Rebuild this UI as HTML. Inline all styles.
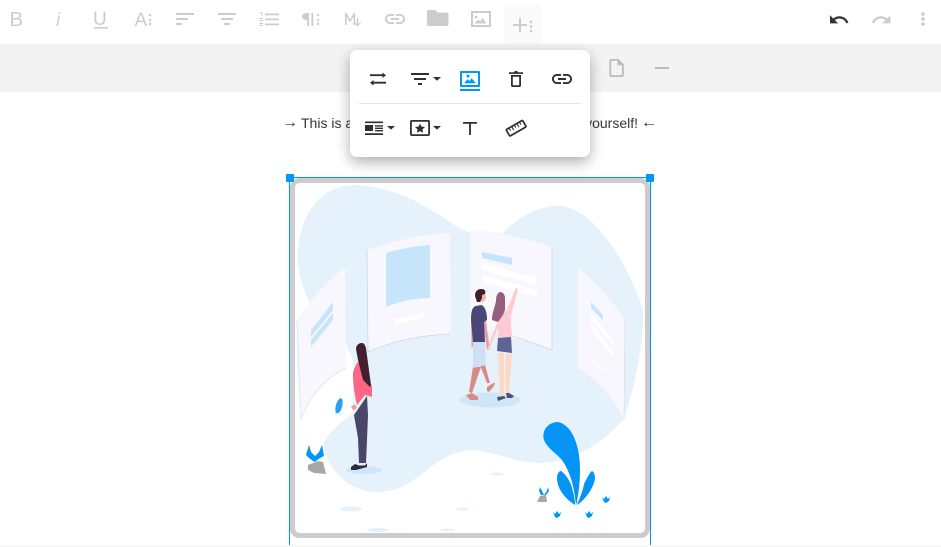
<!DOCTYPE html>
<html lang="en"><head><meta charset="utf-8"><title>Editor</title>
<style>
html,body{margin:0;padding:0;width:941px;height:547px;overflow:hidden;background:#fff;font-family:"Liberation Sans",sans-serif}
#top{position:absolute;left:0;top:44px;width:941px;height:48px;background:#f3f3f3}
.t{position:absolute;top:114px;font-size:14px;line-height:18px;color:#3a3340;white-space:nowrap}
.a{position:absolute;top:114px;font-size:16px;line-height:18px;color:#3a2b38;white-space:nowrap}
#pop{position:absolute;left:350px;top:50px;width:240px;height:107px;background:#fff;border-radius:7px;box-shadow:0 5px 14px rgba(0,0,0,.32)}
svg{position:absolute;left:0;top:0}
</style></head><body>
<div id="top"></div>
<div class="a" style="left:282px">→</div>
<div class="t" style="left:301px">This is a</div>
<div class="t" style="right:303px">yourself!</div>
<div class="a" style="left:641px">←</div>

<svg width="941" height="547" viewBox="0 0 941 547" style="font-family:'Liberation Sans',sans-serif">
<!-- toolbar -->
<rect x="504" y="5" width="38" height="39" rx="4" fill="#fafafa"/>
<g fill="#ccc">
<text x="9.500" y="26" font-size="20.500">B</text>
<text x="56" y="26" font-size="19" font-style="italic" fill="#d0d0d0">i</text>
<text x="93" y="25" font-size="19">U</text>
<rect x="94" y="27" width="14" height="1.600"/>
<text x="134.500" y="26" font-size="19">A</text>
<circle cx="150" cy="15" r="1.200"/><circle cx="150" cy="20" r="1.200"/><circle cx="150" cy="24" r="1.200"/>
<path d="M176 13h18v2h-18zM176 18h12v2h-12zM176 23h6v2h-6z"/>
<path d="M218 13h18v2h-18zM221 18h12v2h-12zM224 23h6v2h-6z"/>
<path d="M265 13.500h14v1.800h-14zM265 18.500h14v1.800h-14zM265 23.500h14v1.800h-14zM260 12h2.500v4h-1v-3h-1.500zM259.500 18h3.500v1h-3.500zM259.500 20h3.500v1h-3.500zM259.500 23h3.500v1h-3.500zM259.500 25h3.500v1h-3.500z"/>
<path d="M309 13v13h-1.800v-6c-3 0-5.200-1.500-5.200-3.500s2-3.500 5-3.500h6.200v13h-1.800V13z"/>
<circle cx="318" cy="15" r="1.200"/><circle cx="318" cy="20" r="1.200"/><circle cx="318" cy="24" r="1.200"/>
<path d="M345 25V13h1.600l3.500 6.500 3.500-6.500h1.500v12h-1.600v-8.500l-3.400 6-3.400-6v8.500z"/>
<path d="M356.800 18h1.400v6l1.900-1.800.8.8-3.400 3.200-3.400-3.200.8-.8 1.900 1.800z"/>
<path transform="translate(383,7)" d="M3.900 12c0-1.710 1.390-3.100 3.100-3.100h4V7H7c-2.760 0-5 2.240-5 5s2.240 5 5 5h4v-1.900H7c-1.710 0-3.100-1.390-3.100-3.100zM8 13h8v-2H8v2zm9-6h-4v1.900h4c1.710 0 3.100 1.390 3.100 3.100s-1.390 3.100-3.100 3.100h-4V17h4c2.760 0 5-2.240 5-5s-2.240-5-5-5z"/>
<path d="M427 11.500q0-1.500 1.500-1.500h7l2 2.500h9q2 0 2 1.500v10.500q0 1.500-1.500 1.500h-18.500q-1.500 0-1.500-1.500z"/>
<path d="M471 11h20v16h-20zM473 13v12h16V13z" fill-rule="evenodd"/>
<circle cx="476" cy="17" r="1.300"/><path d="M474.500 23.500l3.500-4 2 2 2.500-3.500 4 5.500z"/>
<path d="M513 24h14v2h-14zM519 18h2v14h-2z"/>
<circle cx="531" cy="22" r="1.300"/><circle cx="531" cy="26.500" r="1.300"/><circle cx="531" cy="31" r="1.300"/>
<path transform="translate(870.600,9) scale(.9)" d="M18.400 10.600C16.550 8.990 14.150 8 11.500 8c-4.650 0-8.580 3.030-9.960 7.220L3.900 16c1.050-3.190 4.050-5.500 7.600-5.500 1.950 0 3.730.72 5.120 1.880L13 16h9V7l-3.600 3.600z"/>
<circle cx="923" cy="14" r="1.800"/><circle cx="923" cy="19" r="1.800"/><circle cx="923" cy="24" r="1.800"/>
</g>
<path transform="translate(828.200,9) scale(.9)" fill="#333" d="M12.500 8c-2.650 0-5.050.99-6.900 2.600L2 7v9h9l-3.620-3.620c1.390-1.160 3.160-1.880 5.120-1.880 3.540 0 6.550 2.310 7.600 5.500l2.370-.78C21.080 11.030 17.150 8 12.500 8z"/>
<!-- second row -->
<path transform="translate(605.800,57.200) scale(.9)" fill="#bbb" d="M14 2H6c-1.100 0-1.990.9-1.990 2L4 20c0 1.100.89 2 1.990 2H18c1.100 0 2-.9 2-2V8l-6-6zM6 20V4h7v5h5v11H6z"/>
<rect x="655" y="67" width="14" height="2" fill="#bbb"/>

<!-- image illustration -->
<rect x="292.500" y="180.500" width="355" height="355" rx="7" fill="#fff" stroke="#ccc" stroke-width="5"/>
<path fill="#e5f2fc" d="M355 185C395 187 425 205 447 220C460 229 475 240 503 233C520 215 540 206 558 206C590 206 625 255 643 310C644 340 635 390 623 420C605 440 575 463 540 463C515 463 490 450 470 450C450 452 437 462 423 473C408 485 395 492 377 492C355 492 332 478 323 447C324 435 340 424 353 413L353 360L345 343C320 325 303 300 298 265C295 225 315 185 355 185Z"/>
<path fill="#f7f7fd" d="M297 320C312 298 330 278 345 268L346 368C325 378 308 398 301 420L297 370Z"/>
<path fill="none" stroke="#dfe3ea" stroke-width=".8" d="M346 368C325 378 308 398 301 420L297 320"/>
<path fill="#f7f7fd" d="M367 250C395 240 425 234 450 233L451 334C420 335 390 342 368 352Z"/>
<path fill="none" stroke="#cfd6e0" stroke-width=".8" d="M367 250L368 352C390 342 420 335 451 334"/>
<path fill="#c6e4fa" d="M386 253C400 249 415 246 430 245L430 298C415 298 400 301 386 307Z"/>
<path fill="#fff" d="M394 319L424 313V318L394 325Z"/>
<path fill="#f7f7fd" d="M470 230C495 231 525 238 552 247L552 350C530 342 510 338 495 332L470 330Z"/>
<path fill="none" stroke="#cfd6e0" stroke-width=".8" d="M552 247V350L510 335"/>
<path fill="#c6e4fa" d="M482 252L512 258V265L482 258Z"/>
<path fill="#fff" d="M482 263L537 278V285L482 270ZM482 275L537 290V297L482 282Z"/>
<path fill="#f7f7fd" d="M578 268C595 282 612 300 625 320L624 420C612 395 595 378 578 368Z"/>
<path fill="none" stroke="#d8dde6" stroke-width=".7" d="M625 320L624 420"/>
<path fill="#c6e4fa" d="M591 302L603 315V320L591 308Z"/>
<path fill="#fff" d="M591 313L613 340V345L591 320ZM591 322L613 352V357L591 330ZM591 356L603 369V371L590 359Z"/>
<path fill="#c6e4fa" d="M311 330L333 302V310L311 337ZM311 340L333 313V320L311 347Z"/>

<!-- left woman -->
<ellipse cx="364" cy="470" rx="18" ry="4" fill="#cfe6f9"/>
<path fill="#4a4668" d="M367 396L354 415L358 438L359 463H366L367 440L368 415Z"/>
<path fill="#2d2b3c" d="M351 467L355 464L359 465.500H365L367 463V467L356 470H351Z"/>
<path fill="#e89f9f" d="M351 406l4-1.500 2 3.500-4 2.500z"/>
<path fill="#ff6584" d="M358 362C355 366 353 371 353 375C353 385 355 396 357 405L365 395L372 397L372 386L365 372Z"/>
<path fill="#421f2c" d="M362 343C358 343 356 346 356 349L358 360L363 380L370 387L371 385L368 363L366 348C365 345 364 343 362 343Z"/>
<!-- couple -->
<ellipse cx="490" cy="400" rx="30" ry="7.500" fill="#cfe6f9"/>
<path fill="#d98a86" d="M473 367H481L472 393L469 392ZM480 365H485L490 383H487Z"/>
<path fill="#d98a86" d="M466 395L472 393L478 397V400H470ZM487 387L495 382L494 386L489 392L487 391Z"/>
<path fill="#ffd8c5" d="M498 353H504L504 397H500ZM506 354H512L510 377L509 393H506L505 377Z"/>
<path fill="#4a4f7c" d="M497 397L504 396L506 398L498 401ZM506 393L509 393L514 396L512 398H507Z"/>
<path fill="#cfdff5" d="M473 342H485L486 365L473 368Z"/>
<path fill="#e89f9f" d="M471 320L474 320L473 347H471.500ZM483 322L486 321L489 343L490 349L487 350L486 343Z"/>
<path fill="#4a4679" d="M471 320C471 312 472 307 476 306L481 305C485 306 487 312 487 320L484 322L485 342H473Z"/>
<circle cx="481" cy="297" r="5" fill="#f0b7a4"/>
<path fill="#3f2029" d="M475 296C475 291 478 289 481 289C485 289 486 291 485 294L482 295V298L480 302L477 302Z"/>
<path fill="#ffc9cf" d="M507 310L516 288L518 289L511 315Z"/>
<path fill="#ffc9cf" d="M497 323L499 325L489 350H487Z"/>
<path fill="#ffc9d6" d="M498 317L510 308L512 337L498 338Z"/>
<path fill="#5b6492" d="M498 338L511 337L512 353L497 351Z"/>
<path fill="#985d7c" d="M500 292C497 293 496 297 496 301C495 307 492 313 492 320L498 322L503 315L505 310V297C504 293 502 292 500 292Z"/>
<!-- plants -->
<path fill="#0095f7" d="M576 505C574 485 570 472 562 460C555 452 548 449 544 440C541 430 549 422 558 422C572 425 580 445 580 470C580 485 578 497 576 505Z"/>
<path fill="#0095f7" d="M575 505C567 500 557 490 557 478C557 474 559 471 561 471C566 474 571 483 572 488C574 495 575 500 575 505Z"/>
<path fill="#0095f7" d="M577 505C581 495 583 490 584 484C587 478 590 472 592 471C594 472 595 475 595 478C594 488 585 500 577 505Z"/>
<path fill="none" stroke="#3b7fc4" stroke-width=".6" d="M552 431C565 442 576 470 577 503M565 436L568 439M562 437L566 434M561 478L573 500M590 480L581 498"/>
<path fill="#a8a6ab" d="M537 502L540 496L546 495L547 502Z"/>
<path fill="#0095f7" d="M540 487L542 491L544 495H541L539 491ZM548 487L549 491L546 495H544L547 491Z"/>
<path fill="#0095f7" d="M553 512L555 514L557 511L559 514L561 512L560 516L557 518L555 517ZM585 512L587 514L589 511L591 514L593 512L592 516L589 518L587 517ZM602 497L604 499L606 496L608 499L610 497L609 501L606 503L604 502Z"/>
<path fill="#0095f7" d="M314.500 462L309 458L306 455L309 445L311 452L315 456L319 452L322 445L324 456L320 458Z"/>
<path fill="#a8a6ab" d="M308 465L318 461L323 462L326 474L314 473L308 470Z"/>
<ellipse cx="339" cy="406" rx="3.200" ry="8" fill="#2aa0f5" transform="rotate(15 339 406)"/>
<ellipse cx="338" cy="414" rx="6" ry="1" fill="#e5f2fc"/>
<g fill="#e5f2fc">
<ellipse cx="351" cy="509" rx="11" ry="2.500"/><ellipse cx="378" cy="530" rx="11" ry="2"/>
<ellipse cx="447" cy="530" rx="7" ry="1.500"/><ellipse cx="463" cy="509" rx="7" ry="1.500"/><ellipse cx="497" cy="474" rx="7" ry="1.500"/>
</g>
<!-- selection -->
<path stroke="#0095ee" stroke-width="1" fill="none" d="M289.500 546V177.500H650.500V546"/>
<rect x="286" y="174" width="8" height="8" rx="1" fill="#0098f7"/>
<rect x="646" y="174" width="8" height="8" rx="1" fill="#0098f7"/>
<rect x="0" y="545" width="941" height="2" fill="#f6f6f6"/>
</svg>

<div id="pop"></div>
<svg width="941" height="547" viewBox="0 0 941 547">
<rect x="359" y="103" width="222" height="1" fill="#e6e6e6"/>
<g fill="#2f2f33">
<path d="M370 74.300h12.500V72.500L386 75.200l-3.500 2.800V76.100H370zM386 81.800h-12.500V80L370 82.800l3.500 2.800V83.600H386z"/>
<path transform="translate(408,67)" d="M10 18h4v-2h-4v2zM3 6v2h18V6H3zm3 7h12v-2H6v2z"/>
<path d="M433 77h8l-4 3.800z"/>
<path d="M514 72.200l.8-1.200h2.400l.8 1.200h5v1.700h-14v-1.700zM511 75h10v10.200a1.800 1.800 0 0 1-1.800 1.800h-6.400a1.800 1.800 0 0 1-1.800-1.800zm1.800 1.700v8.500h6.400v-8.500z" fill-rule="evenodd"/>
<path transform="translate(550,67)" d="M3.900 12c0-1.710 1.390-3.100 3.100-3.100h4V7H7c-2.760 0-5 2.240-5 5s2.240 5 5 5h4v-1.900H7c-1.710 0-3.100-1.390-3.100-3.100zM8 13h8v-2H8v2zm9-6h-4v1.900h4c1.710 0 3.100 1.390 3.100 3.100s-1.390 3.100-3.100 3.100h-4V17h4c2.760 0 5-2.240 5-5s-2.240-5-5-5z"/>
<path d="M365 121.500h18v1.600h-18zM365 125h8v6h-8zM375 125.200h8v1.400h-8zM375 127.600h8v1.400h-8zM375 130h8v1.400h-8zM365 133.300h18v1.700h-18z"/>
<path d="M387 126h8l-4 3.600z"/>
<path d="M412 120h16a2 2 0 0 1 2 2v12a2 2 0 0 1-2 2h-16a2 2 0 0 1-2-2v-12a2 2 0 0 1 2-2zm0 1.800a.5.5 0 0 0-.2.2v12a.5.5 0 0 0 .2.200h16a.5.5 0 0 0 .2-.2v-12a.5.5 0 0 0-.2-.2z" fill-rule="evenodd"/>
<path d="M420 123.500l1.500 3.100 3.500.4-2.500 2.400.6 3.400-3.100-1.700-3.100 1.700.6-3.400-2.500-2.400 3.500-.4z"/>
<path d="M433 126h8l-4 3.600z"/>
<path d="M463 122h14v1.700h-6.100V135h-1.800V123.700H463z"/>
</g>
<g transform="rotate(-30 516 128)" fill="none" stroke="#2f2f33" stroke-width="1.700">
<rect x="506.500" y="124.500" width="19" height="7.500" rx="1"/>
<path stroke-width="1.100" d="M510 124.500v3M513 124.500v4M516 124.500v3M519 124.500v4M522 124.500v3"/>
</g>
<g fill="#0098f7">
<path d="M461 71h18a1 1 0 0 1 1 1v14a1 1 0 0 1-1 1h-18a1 1 0 0 1-1-1v-14a1 1 0 0 1 1-1zm1 2v12h16v-12z" fill-rule="evenodd"/>
<circle cx="468" cy="76" r="1.500"/>
<path d="M464 83.300l3.500-4 2 1.800 2-2.800 4.500 5z"/>
<rect x="460" y="89" width="20" height="2"/>
</g>
</svg>
</body></html>
